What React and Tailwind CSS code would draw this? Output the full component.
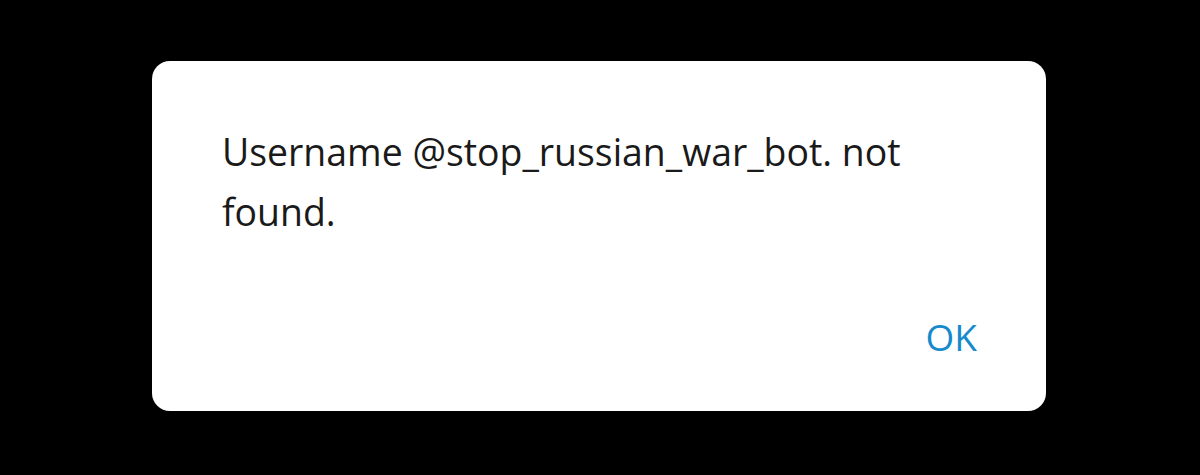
export default function App() {
  return (
    <div className="flex h-[475px] w-[1200px] items-start justify-center bg-black pt-[61px]" style={{ fontFamily: '"Open Sans", sans-serif' }}>
      <div className="ml-[-2px] flex h-[350px] w-[894px] flex-col rounded-[18px] bg-white">
        <p className="px-[70px] pt-[61px] text-[37.4px] leading-[60px] text-[#1a1a1a]">
          Username @stop_russian_war_bot. not found.
        </p>
        <div className="mt-auto flex justify-end px-[69px] pb-[50px]">
          <button type="button" className="text-[37px] leading-[48px] font-medium text-[#168acd]">
            OK
          </button>
        </div>
      </div>
    </div>
  );
}
